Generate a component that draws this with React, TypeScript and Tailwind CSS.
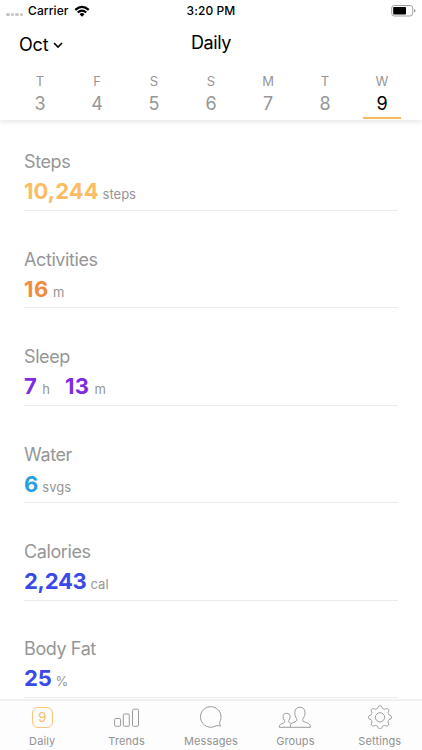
import React from "react";

type Reading = { value: string; unit: string; gap: string };
type Metric = { name: string; color: string; tracking: string; readings: Reading[] };

const days = [
  ["T", "3"],
  ["F", "4"],
  ["S", "5"],
  ["S", "6"],
  ["M", "7"],
  ["T", "8"],
  ["W", "9"],
];

const metrics: Metric[] = [
  { name: "Steps", color: "text-[#fbbc63]", tracking: "tracking-[0.05px]", readings: [{ value: "10,244", unit: "steps", gap: "ml-[4px]" }] },
  { name: "Activities", color: "text-[#f08d3c]", tracking: "tracking-[0.6px]", readings: [{ value: "16", unit: "m", gap: "ml-[4px]" }] },
  {
    name: "Sleep",
    color: "text-[#7f2de0]",
    tracking: "tracking-[0.4px]",
    readings: [
      { value: "7", unit: "h", gap: "ml-[5px]" },
      { value: "13", unit: "m", gap: "ml-[5px]" },
    ],
  },
  { name: "Water", color: "text-[#2b9fe3]", tracking: "tracking-[0px]", readings: [{ value: "6", unit: "svgs", gap: "ml-[4px]" }] },
  { name: "Calories", color: "text-[#3a49e8]", tracking: "tracking-[-0.25px]", readings: [{ value: "2,243", unit: "cal", gap: "ml-[4px]" }] },
  { name: "Body Fat", color: "text-[#3a49e8]", tracking: "tracking-[-0.2px]", readings: [{ value: "25", unit: "%", gap: "ml-[4px]" }] },
];

function Wifi() {
  return (
    <svg width="16" height="12" viewBox="0 0 16 12" className="ml-[5px]">
      <path d="M0.5 4.1 Q8 -2.7 15.5 4.1 L14 5.7 Q8 0.4 2 5.7Z" />
      <path d="M3 6.7 Q8 2.2 13 6.7 L11.5 8.3 Q8 5.2 4.5 8.3Z" />
      <path d="M5.5 9.2 Q8 7 10.5 9.2 L8 11.7Z" />
    </svg>
  );
}

function Battery() {
  return (
    <svg width="26" height="12" viewBox="0 0 26 12">
      <rect x="0.7" y="0.5" width="21" height="10.5" rx="2.6" fill="none" stroke="#a0a0a0" />
      <rect x="2.2" y="2" width="12.8" height="7.5" rx="0.8" />
      <path d="M23 4 Q24.6 4.4 24.6 5.75 Q24.6 7.1 23 7.5Z" fill="#a0a0a0" />
    </svg>
  );
}

function StatusBar() {
  return (
    <div className="grid h-5 grid-cols-3 items-center text-[12px] font-medium leading-5">
      <div className="flex items-center pl-[6px]">
        <div className="mt-[8px] flex gap-[1px]">
          {[0, 1, 2, 3].map((i) => (
            <span key={i} className="size-[3.5px] rounded-full bg-[#c4c4c4]" />
          ))}
        </div>
        <span className="ml-[5px] mt-px tracking-[0.1px]">Carrier</span>
        <Wifi />
      </div>
      <div className="mt-px text-center tracking-[0.1px]">3:20 PM</div>
      <div className="flex justify-end pr-[5px]">
        <Battery />
      </div>
    </div>
  );
}

function Header() {
  return (
    <header className="h-[120px] shrink-0 bg-white shadow-[0_2px_5px_rgba(0,0,0,0.1)]">
      <StatusBar />
      <div className="grid h-[50px] grid-cols-3 text-[18px]">
        <div className="flex items-center pb-[2px] pl-[19px]">
          <span className="tracking-[-0.2px]">Oct</span>
          <svg width="10" height="7" viewBox="0 0 10 7" className="ml-[5px] mt-[2px]">
            <path d="M1 1 L5 5 L9 1" fill="none" stroke="#000" strokeWidth="1.6" />
          </svg>
        </div>
        <div className="pt-[9px] text-center leading-7 tracking-[-0.4px]">Daily</div>
      </div>
      <div className="flex px-[11.5px]">
        {days.map(([letter, date], i) => (
          <div key={i} className="flex h-[50px] flex-1 flex-col items-center text-[#969696]">
            <span className="mt-[2px] text-[13px] leading-[18px]">{letter}</span>
            <span className={i === 6 ? "mt-[3px] text-[18px] leading-[22px] text-black" : "mt-[3px] text-[18px] leading-[22px]"}>
              {date}
            </span>
            {i === 6 && <span className="mt-[2px] h-[2px] w-[38px] bg-[#f7bb5e]" />}
          </div>
        ))}
      </div>
    </header>
  );
}

function MetricRow({ metric }: { metric: Metric }) {
  return (
    <section className="mb-[35.9px] h-[61.5px] shrink-0 border-b border-[#ebebeb]">
      <h2 className="h-6 pt-px text-[18px] leading-[24px] tracking-[-0.4px] text-[#969696]">{metric.name}</h2>
      <div className="flex items-baseline gap-[15px] leading-[36px]">
        {metric.readings.map((r) => (
          <div key={r.unit} className="flex items-baseline">
            <span className={`text-[22px] font-bold ${metric.color} ${metric.tracking}`}>{r.value}</span>
            <span className={`text-[13px] text-[#969696] ${r.gap}`}>{r.unit}</span>
          </div>
        ))}
      </div>
    </section>
  );
}

const line = { fill: "none", stroke: "#9b9b9b", strokeWidth: 1, strokeLinejoin: "round" as const };

function TrendsIcon() {
  return (
    <svg width="28" height="24" viewBox="0 0 28 24" {...line}>
      <rect x="1.6" y="13.5" width="6" height="7.8" rx="1.2" />
      <rect x="10.3" y="9" width="6" height="12.3" rx="1.2" />
      <rect x="19.5" y="4.2" width="6" height="17.1" rx="1.2" />
    </svg>
  );
}

function MessagesIcon() {
  return (
    <svg width="24" height="24" viewBox="0 0 24 24" {...line}>
      <path d="M20.5 17.4 A10.3 10.3 0 1 0 17.2 20.7 Q19.2 20.2 21.5 21.2 Q20.5 19.2 20.5 17.4Z" />
    </svg>
  );
}

function GroupsIcon() {
  return (
    <svg width="34" height="24" viewBox="0 0 34 24" {...line}>
      <path d="M12.2 22.3 C12.2 18.3 14 17.8 17 16.8 C19 16.1 19 14.8 18.5 13.6 C17 11.3 16.8 9.8 16.8 7.5 C16.8 4.2 18.8 2.3 21.9 2.3 C25 2.3 27 4.2 27 7.5 C27 9.8 26.6 11.3 25 13.6 C24.4 14.8 24.4 16.1 26 16.8 C30 18.1 32.2 18.4 32.4 22.3Z" />
      <path d="M12.2 22.3 H1.3 C1.3 19.3 3 19 5.2 18.2 C6.8 17.6 6.9 16.6 6.4 15.6 C5.5 14.1 5.1 13.3 5.1 11.7 C5.1 9.5 6.5 8.3 8.6 8.3 C10.7 8.3 12.1 9.5 12.1 11.7 C12.1 13.3 11.7 14.1 10.8 15.6 C10.1 16.6 10.2 17.4 12.8 18.2" />
    </svg>
  );
}

function SettingsIcon() {
  const points = Array.from({ length: 96 }, (_, i) => {
    const a = (i / 96) * Math.PI * 2;
    const wave = Math.max(-0.8, Math.min(1, 1.4 * Math.cos(8 * a)));
    const r = 10.2 + 1.3 * wave;
    return `${(12 + r * Math.sin(a)).toFixed(2)},${(12.3 - r * Math.cos(a)).toFixed(2)}`;
  }).join(" ");
  return (
    <svg width="24" height="24" viewBox="0 0 24 24" {...line}>
      <polygon points={points} />
      <circle cx="12" cy="12.3" r="4.6" />
    </svg>
  );
}

function DailyIcon() {
  return (
    <div className="mt-px flex size-[21px] items-center justify-center rounded-[6px] border-[1.5px] border-[#f9c67d] text-[13px] leading-none text-[#f7bb66]">
      9
    </div>
  );
}

const tabs = [
  { label: "Daily", icon: <DailyIcon /> },
  { label: "Trends", icon: <TrendsIcon /> },
  { label: "Messages", icon: <MessagesIcon /> },
  { label: "Groups", icon: <GroupsIcon /> },
  { label: "Settings", icon: <SettingsIcon /> },
];

export default function App() {
  return (
    <div className="flex h-[750px] w-[422px] flex-col overflow-hidden bg-white font-[Inter,sans-serif] text-black">
      <Header />
      <main className="flex min-h-0 flex-1 flex-col overflow-hidden px-6 pt-[29.45px] [clip-path:inset(10px_0_0_0)]">
        {metrics.map((m) => (
          <MetricRow key={m.name} metric={m} />
        ))}
      </main>
      <nav className="grid h-[51px] shrink-0 grid-cols-5 border-t-2 border-[#f0f0f0] bg-[#fdfdfd]">
        {tabs.map((t) => (
          <div key={t.label} className="flex flex-col items-center">
            <div className="mt-[4px] flex h-6 items-center">{t.icon}</div>
            <span className="mt-[4px] text-[11px] leading-[16px] tracking-[0.1px] text-[#929292]">{t.label}</span>
          </div>
        ))}
      </nav>
    </div>
  );
}
